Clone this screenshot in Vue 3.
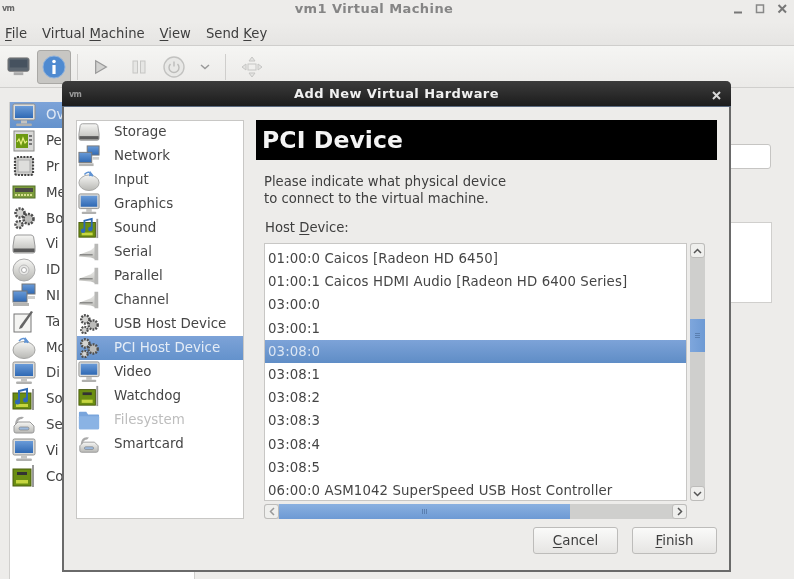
<script setup>
const sideRows = [
  ['monitor', 'Ov', 1], ['perf', 'Pe'], ['cpu', 'Pr'], ['ram', 'Me'], ['gears', 'Bo'],
  ['disk', 'Vi'], ['cd', 'ID'], ['net', 'NI'], ['tablet', 'Ta'], ['mouse', 'Mo'],
  ['monitor', 'Di'], ['sound', 'So'], ['serial', 'Se'], ['monitor', 'Vi'], ['card', 'Co'],
]
const hwRows = [
  ['disk', 'Storage'], ['net', 'Network'], ['mouse', 'Input'], ['monitor', 'Graphics'], ['sound', 'Sound'],
  ['plug', 'Serial'], ['plug', 'Parallel'], ['plug', 'Channel'], ['gears', 'USB Host Device'],
  ['gears', 'PCI Host Device', 'sel'], ['monitor', 'Video'], ['card', 'Watchdog'], ['folder', 'Filesystem', 'off'], ['serial', 'Smartcard'],
]
const devices = [
  '01:00:0 Caicos [Radeon HD 6450]', '01:00:1 Caicos HDMI Audio [Radeon HD 6400 Series]', '03:00:0', '03:00:1', '03:08:0',
  '03:08:1', '03:08:2', '03:08:3', '03:08:4', '03:08:5', '06:00:0 ASM1042 SuperSpeed USB Host Controller',
]
</script>

<template>
  <div class="screen">
    <svg class="defs" width="0" height="0">
      <defs>
        <linearGradient id="scr" x1="0" y1="0" x2="0" y2="1"><stop offset="0" stop-color="#6a9bd8"/><stop offset="1" stop-color="#2f69b4"/></linearGradient>
        <linearGradient id="silver" x1="0" y1="0" x2="0" y2="1"><stop offset="0" stop-color="#f6f6f4"/><stop offset="1" stop-color="#b8b8b4"/></linearGradient>
        <symbol id="i-monitor" viewBox="0 0 24 24"><rect x="1" y="1" width="22" height="16" rx="1.500" fill="#dcdcda" stroke="#8f8f8d"/><rect x="3" y="3" width="18" height="12" fill="url(#scr)"/><rect x="9" y="17.500" width="6" height="3" fill="#c4c4c2"/><rect x="4" y="20.500" width="16" height="2.500" rx="1.200" fill="#b0b0ae"/></symbol>
        <symbol id="i-disk" viewBox="0 0 24 24"><path d="M5 3h14q2 0 2.600 2l1.400 9v5q0 2-2 2H3q-2 0-2-2v-5l1.400-9Q3 3 5 3z" fill="url(#silver)" stroke="#999"/><rect x="1.500" y="16.500" width="21" height="3.500" fill="#5a5a5a"/></symbol>
        <symbol id="i-net" viewBox="0 0 24 24"><rect x="10" y="1" width="13" height="10" fill="url(#scr)" stroke="#777"/><rect x="1" y="8" width="14" height="11" fill="url(#scr)" stroke="#777"/><rect x="1" y="20" width="16" height="3" fill="#b4b4b2"/><path d="M16 13h7v3h-7" fill="#cfcfcd"/></symbol>
        <symbol id="i-mouse" viewBox="0 0 24 24"><ellipse cx="12" cy="15" rx="11" ry="8.500" fill="url(#silver)" stroke="#a4a4a2"/><path d="M7 6q5-6 9 2" fill="none" stroke="#5f93d4" stroke-width="1.600"/><path d="M13 2l4 5-5 1z" fill="#5f93d4"/></symbol>
        <symbol id="i-sound" viewBox="0 0 24 24"><rect x="1" y="6" width="18" height="16" fill="#6b8e12" stroke="#4a5c10"/><rect x="4" y="17" width="12" height="3" fill="#c6d640"/><rect x="20" y="2" width="2" height="21" fill="#999"/><path d="M7 15V4l8-2v11" fill="none" stroke="#2f69b4" stroke-width="2"/><circle cx="5.500" cy="15" r="2.500" fill="#2f69b4"/><circle cx="13.500" cy="13" r="2.500" fill="#2f69b4"/></symbol>
        <symbol id="i-card" viewBox="0 0 24 24"><rect x="1" y="5" width="18" height="17" fill="#6b8e12" stroke="#4a5c10"/><rect x="5" y="8" width="10" height="3" fill="#333"/><rect x="4" y="16" width="12" height="3.500" fill="#c6d640"/><rect x="20" y="1" width="2" height="22" fill="#999"/></symbol>
        <symbol id="i-plug" viewBox="0 0 24 24"><path d="M1 15l13-5 8-7v18l-8-3-13-1z" fill="url(#silver)"/><rect x="18" y="3" width="4" height="18" fill="#b8b8b6"/><path d="M2 15h14" stroke="#8a8a88" stroke-width="1.600"/></symbol>
        <symbol id="i-gears" viewBox="0 0 24 24"><circle cx="8" cy="7" r="4.500" fill="#d4d4d2" stroke="#4e4e4e" stroke-width="2.600" stroke-dasharray="2 1.200"/><circle cx="16.500" cy="13" r="5" fill="#bcbcba" stroke="#4e4e4e" stroke-width="2.600" stroke-dasharray="2 1.200"/><circle cx="7" cy="18.500" r="3.500" fill="#d4d4d2" stroke="#4e4e4e" stroke-width="2.400" stroke-dasharray="2 1.200"/></symbol>
        <symbol id="i-folder" viewBox="0 0 24 24"><path d="M1 4a1 1 0 0 1 1-1h7l2 3h11a1 1 0 0 1 1 1v14a1 1 0 0 1-1 1H2a1 1 0 0 1-1-1z" fill="#79a5dc"/><rect x="1" y="8" width="22" height="14" rx="1" fill="#8ab3e4"/></symbol>
        <symbol id="i-serial" viewBox="0 0 24 24"><path d="M3 12q1-9 9-7l-2 2q-4 0-5 5" fill="#aaa"/><path d="M2 14l4-4h12l4 4v5a2 2 0 0 1-2 2H4a2 2 0 0 1-2-2z" fill="url(#silver)" stroke="#999"/><rect x="7" y="15" width="10" height="3" rx="1.500" fill="#9db9dc" stroke="#777" stroke-width=".6"/></symbol>
        <symbol id="i-perf" viewBox="0 0 24 24"><rect x="2" y="2" width="20" height="20" fill="#d8d8d6" stroke="#8a8a88"/><rect x="4" y="5" width="12" height="14" fill="#6d9a12"/><path d="M5 13l2-3 2 5 2-6 2 5 2-2" fill="none" stroke="#e8f080" stroke-width="1.200"/><rect x="17" y="6" width="3" height="2" fill="#777"/><rect x="17" y="10" width="3" height="2" fill="#777"/><rect x="17" y="14" width="3" height="2" fill="#777"/></symbol>
        <symbol id="i-cpu" viewBox="0 0 24 24"><rect x="3" y="3" width="18" height="18" rx="2" fill="#cfcfcd" stroke="#444" stroke-width="2.200" stroke-dasharray="2 1.200"/><rect x="6" y="6" width="12" height="12" fill="#dededc" stroke="#aaa"/></symbol>
        <symbol id="i-ram" viewBox="0 0 24 24"><rect x="1" y="6" width="22" height="12" fill="#7c9c3c" stroke="#55702a"/><rect x="3" y="8" width="18" height="4" fill="#4a4a44"/><path d="M3 15h18" stroke="#d8e090" stroke-width="2" stroke-dasharray="2 1"/></symbol>
        <symbol id="i-cd" viewBox="0 0 24 24"><circle cx="12" cy="12" r="11" fill="url(#silver)" stroke="#aaa"/><circle cx="12" cy="12" r="5" fill="#e8e8e6" stroke="#bbb"/><circle cx="12" cy="12" r="2.500" fill="#fff" stroke="#aaa"/></symbol>
        <symbol id="i-tablet" viewBox="0 0 24 24"><rect x="2" y="5" width="17" height="18" fill="#f4f4f2" stroke="#777"/><path d="M8 17l-1 3 3-1L21 3l-2-1z" fill="#666"/></symbol>
      </defs>
    </svg>

    <header class="titlebar">
      <span class="wm-icon">vm</span>
      <span class="win-title">vm1 Virtual Machine</span>
      <span class="win-buttons">
        <svg width="58" height="12" viewBox="0 0 58 12"><path d="M1 9.500h8" stroke="#777" stroke-width="2"/><rect x="23.500" y="2" width="7" height="7.500" fill="none" stroke="#888" stroke-width="1.500"/><path d="M45.500 2l7.500 7.500M53 2l-7.500 7.500" stroke="#777" stroke-width="2"/></svg>
      </span>
    </header>

    <nav class="menubar">
      <span><u>F</u>ile</span><span>Virtual <u>M</u>achine</span><span><u>V</u>iew</span><span>Send <u>K</u>ey</span>
    </nav>

    <div class="toolbar">
      <svg class="tb-console" width="23" height="23" viewBox="0 0 24 24"><rect x="1" y="3" width="22" height="14" rx="2" fill="#5c6670" stroke="#777"/><rect x="3" y="5" width="18" height="8" fill="#46525f"/><rect x="7" y="18" width="10" height="3" fill="#aaa"/></svg>
      <span class="tb-toggle">
        <svg width="24" height="24" viewBox="0 0 24 24"><circle cx="12" cy="12" r="11" fill="#4f8ad0" stroke="#8fb2dc"/><circle cx="12" cy="6.500" r="1.800" fill="#fff"/><rect x="10.400" y="10" width="3.200" height="9" fill="#fff"/></svg>
      </span>
      <i class="tb-sep"></i>
      <svg width="16" height="18" viewBox="0 0 18 18"><path d="M3 2l12 7-12 7z" fill="#d2d2d0" stroke="#999" stroke-width="1.400"/></svg>
      <svg class="tb-pause" width="14" height="14" viewBox="0 0 14 14"><rect x="1" y="1" width="4.500" height="12" fill="#e6e6e4" stroke="#c6c6c4"/><rect x="8.500" y="1" width="4.500" height="12" fill="#e6e6e4" stroke="#c6c6c4"/></svg>
      <svg class="tb-power" width="22" height="22" viewBox="0 0 22 22"><circle cx="11" cy="11" r="10" fill="#e8e8e6" stroke="#c2c2c0" stroke-width="1.400"/><path d="M7.500 8a5 5 0 1 0 7 0M11 5.500v5" fill="none" stroke="#bcbcba" stroke-width="1.400"/></svg>
      <svg class="tb-chev" width="10" height="6" viewBox="0 0 10 6"><path d="M1 1l4 3.500L9 1" fill="none" stroke="#999" stroke-width="1.500"/></svg>
      <i class="tb-sep"></i>
      <svg class="tb-move" width="22" height="22" viewBox="0 0 22 22"><rect x="7" y="8" width="8" height="6" fill="none" stroke="#c6c6c4"/><path d="M11 1l3 4H8zM11 21l3-4H8zM1 11l4-3v6zM21 11l-4-3v6z" fill="#e4e4e2" stroke="#c6c6c4"/></svg>
    </div>

    <main class="content">
      <aside class="side">
        <div v-for="(r, i) in sideRows" :key="i" class="side-row" :class="{ sel: r[2] }">
          <svg width="24" height="24"><use :href="'#i-' + r[0]"/></svg>
          <span>{{ r[1] }}</span>
        </div>
      </aside>
      <section class="pane">
        <div class="pane-input"></div>
        <div class="pane-box"></div>
      </section>
    </main>

    <div class="dialog">
      <div class="dlg-title">
        <span class="wm-icon dark">vm</span>
        <span class="dlg-name">Add New Virtual Hardware</span>
        <svg class="dlg-x" width="9" height="9" viewBox="0 0 9 9"><path d="M1 1l7 7M8 1l-7 7" stroke="#d8d8d8" stroke-width="2"/></svg>
      </div>
      <div class="dlg-body">
        <div class="hw-list">
          <div v-for="r in hwRows" :key="r[1]" class="hw-row" :class="r[2]">
            <svg width="22" height="22"><use :href="'#i-' + r[0]"/></svg>
            <span>{{ r[1] }}</span>
          </div>
        </div>
        <div class="detail">
          <h1 class="banner">PCI Device</h1>
          <p class="intro">Please indicate what physical device<br>to connect to the virtual machine.</p>
          <div class="host-label">Host <u>D</u>evice:</div>
          <div class="list-grid">
            <div class="dev-list">
              <div v-for="d in devices" :key="d" class="dev-row" :class="{ sel: d === '03:08:0' }">{{ d }}</div>
            </div>
            <div class="vscroll">
              <span class="sb-btn"><svg width="9" height="6" viewBox="0 0 9 6"><path d="M1 5l3.500-3.500L8 5" fill="none" stroke="#555" stroke-width="1.500"/></svg></span>
              <span class="vtrack"><span class="vthumb"></span></span>
              <span class="sb-btn"><svg width="9" height="6" viewBox="0 0 9 6"><path d="M1 1l3.500 3.500L8 1" fill="none" stroke="#555" stroke-width="1.500"/></svg></span>
            </div>
            <div class="hscroll">
              <span class="sb-btn"><svg width="6" height="9" viewBox="0 0 6 9"><path d="M5 1L1.500 4.500 5 8" fill="none" stroke="#999" stroke-width="1.500"/></svg></span>
              <span class="hthumb"></span>
              <span class="htrack"></span>
              <span class="sb-btn"><svg width="6" height="9" viewBox="0 0 6 9"><path d="M1 1l3.500 3.500L1 8" fill="none" stroke="#555" stroke-width="1.500"/></svg></span>
            </div>
          </div>
          <div class="actions">
            <button class="btn"><u>C</u>ancel</button>
            <button class="btn"><u>F</u>inish</button>
          </div>
        </div>
      </div>
    </div>
  </div>
</template>

<style>
html, body { margin: 0; background: #edecea; overflow: hidden; }
</style>

<style scoped>
.defs { position: absolute; }
.screen {
  position: relative; width: 794px; height: 579px; overflow: hidden; background: #edecea;
  font-family: "DejaVu Sans", sans-serif; font-size: 13.4px; color: #444; filter: blur(.7px);
  display: flex; flex-direction: column;
}
u { text-underline-offset: 2px; text-decoration-thickness: 1px; }
.titlebar { height: 22px; flex: none; position: relative; display: flex; align-items: center; justify-content: center; padding-right: 46px; }
.wm-icon { position: absolute; left: 2px; top: 4px; font: bold 8px/10px "DejaVu Sans", sans-serif; color: #666; letter-spacing: -.6px; }
.win-title { font-weight: bold; font-size: 13px; color: #858585; letter-spacing: .42px; margin-top: -6px; }
.win-buttons { position: absolute; left: 733px; top: 3px; height: 12px; }
.menubar {
  height: 24px; flex: none; display: flex; gap: 15px; align-items: center; padding: 0 5px;
  color: #3e3e3e; border-bottom: 1px solid #cfcecc; box-sizing: border-box;
  font-size: 13.2px; background: linear-gradient(#edecea, #e6e5e3);
}
.toolbar {
  height: 42px; flex: none; box-sizing: border-box; display: flex; align-items: center; padding: 0 0 0 7px;
  background: linear-gradient(#f5f5f3, #ebeae8); border-bottom: 1px solid #d0cfcd;
}
.tb-console { margin-right: 7px; }
.tb-toggle { width: 34px; height: 34px; box-sizing: border-box; display: flex; align-items: center; justify-content: center; background: #c7c6c3; border: 1px solid #a9a8a5; border-radius: 3px; margin-right: 6px; }
.tb-sep { width: 1px; height: 26px; background: #cfcecc; margin-right: 15px; }
.tb-pause { margin: 0 17px 0 23px; }
.tb-power { margin-right: 15px; }
.tb-chev { margin-right: 15px; }
.content { flex: 1; display: flex; min-height: 0; padding-top: 14px; }
.side { width: 186px; flex: none; margin-left: 9px; background: #fff; border-left: 1px solid #d0cfcd; border-right: 1px solid #d0cfcd; box-sizing: border-box; overflow: hidden; }
.side-row { height: 25.8px; display: flex; align-items: center; gap: 10px; padding-left: 2px; white-space: nowrap; color: #444; }
.side-row svg { flex: none; }
.side-row.sel { background: linear-gradient(#7da3d8, #6492cc); color: #dfe8f4; }
.pane { flex: 1; }
.pane-input { height: 23px; margin: 42px 23px 0 0; background: #fff; border: 1px solid #c6c5c3; border-radius: 3px; }
.pane-box { height: 79px; margin: 53px 22px 0 0; background: #fff; border: 1px solid #d0cfcd; }
.dialog { position: absolute; left: 62px; top: 81px; width: 669px; height: 491px; box-sizing: border-box; border: 2px solid #6a6a6a; border-top: none; border-radius: 5px 5px 0 0; background: #edecea; display: flex; flex-direction: column; }
.dlg-title { margin: 0 -2px; height: 26px; flex: none; position: relative; display: flex; align-items: center; justify-content: center; background: linear-gradient(#3c3c3c, #1c1c1c); border-radius: 5px 5px 0 0; border-bottom: 1px solid #5a6a80; box-sizing: border-box; }
.wm-icon.dark { left: 7px; top: 9px; color: #999; }
.dlg-name { font-weight: bold; font-size: 13px; color: #f0f0f0; letter-spacing: .42px; }
.dlg-x { position: absolute; left: 650px; top: 10px; }
.dlg-body { flex: 1; min-height: 0; display: flex; padding: 13px 12px 17px 12px; gap: 12px; }
.hw-list { width: 168px; height: 399px; flex: none; box-sizing: border-box; background: #fff; outline: 1px solid #c8c7c5; outline-offset: -1px; }
.hw-row { height: 24px; display: flex; align-items: center; gap: 14px; padding-left: 2px; color: #454545; white-space: nowrap; }
.hw-row svg { flex: none; }
.hw-row span { margin-top: -1px; }
.hw-row.sel { background: linear-gradient(#7da3d8, #6492cc); color: #e4ecf6; }
.hw-row.off { color: #bdbdbd; }
.detail { flex: 1; min-width: 0; display: flex; flex-direction: column; }
.banner { margin: 0; height: 40px; flex: none; background: #000; color: #f4f4f4; font-size: 23.5px; line-height: 40px; font-weight: bold; padding-left: 6px; letter-spacing: .1px; }
.intro { margin: 13px 0 0 8px; line-height: 17px; color: #3e3e3e; font-size: 13.2px; }
.host-label { margin: 12px 0 0 9px; line-height: 17px; color: #3e3e3e; font-size: 13.2px; }
.list-grid { margin: 7px 0 0 8px; display: grid; grid-template-columns: 423px 15px; grid-template-rows: 258px 15px; column-gap: 3px; row-gap: 3px; }
.dev-list { box-sizing: border-box; background: #fff; border: 1px solid #c8c7c5; padding-top: 3px; overflow: hidden; }
.dev-row { height: 23.2px; line-height: 23px; padding-left: 3px; white-space: nowrap; color: #454545; font-size: 13.3px; letter-spacing: .12px; }
.dev-row.sel { background: linear-gradient(#7da3d8, #5f8dc6); color: #dce6f3; }
.vscroll { display: flex; flex-direction: column; background: #cfcfcd; border-radius: 3px; }
.hscroll { display: flex; background: #cfcfcd; border-radius: 3px; }
.sb-btn { flex: none; width: 15px; height: 15px; display: flex; align-items: center; justify-content: center; background: #efefed; border: 1px solid #bdbcba; box-sizing: border-box; border-radius: 3px; }
.vtrack { flex: 1; position: relative; display: block; }
.vthumb { position: absolute; left: 0; right: 0; top: 61px; height: 33px; display: flex; align-items: center; justify-content: center; background: linear-gradient(90deg, #7ea6dc, #6d9ad4); }
.vthumb::after { content: ""; width: 5px; height: 5px; background: repeating-linear-gradient(#5a7fb0 0 1px, transparent 1px 2px); }
.hthumb { width: 291px; flex: none; display: flex; align-items: center; justify-content: center; background: linear-gradient(#8ab0e0, #6d9ad4); }
.hthumb::after { content: ""; width: 6px; height: 5px; background: repeating-linear-gradient(90deg, #5a7fb0 0 1px, transparent 1px 2px); }
.htrack { flex: 1; }
.actions { display: flex; justify-content: flex-end; gap: 14px; margin-top: 8px; }
.btn { width: 85px; height: 27px; box-sizing: border-box; background: linear-gradient(#fafaf9, #e6e5e3); border: 1px solid #bdbcba; border-radius: 3px; font: 13.4px "DejaVu Sans", sans-serif; color: #3e3e3e; padding: 0; }
</style>
